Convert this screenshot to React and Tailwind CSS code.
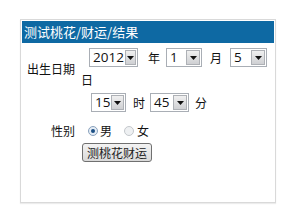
import React from "react";

const cjk = { fontFamily: '"Noto Sans CJK SC", "Noto Sans", sans-serif' };
const num = { fontFamily: '"Open Sans", "Liberation Sans", sans-serif' };

function Select({ value, w }) {
  return (
    <div
      className={`flex h-[19px] shrink-0 items-stretch border border-[#a9aeb5] bg-white ${w}`}
    >
      <div className="flex flex-1 items-center pl-[3px] text-[13.5px] leading-none text-[#111]" style={num}>
        {value}
      </div>
      <div className="m-px flex w-[14px] items-center justify-center border border-[#aeb1b6] bg-gradient-to-b from-[#f0f0f0] to-[#cfd0d3]">
        <svg width="7" height="4" viewBox="0 0 7 4">
          <path d="M0 0H7L3.5 4Z" fill="#111" />
        </svg>
      </div>
    </div>
  );
}

function Radio({ checked }) {
  return (
    <div
      className={`flex h-[10px] w-[10px] items-center justify-center rounded-full border ${
        checked ? "border-[#8aa2bd] bg-[#e4ecf5]" : "border-[#c4c8cc] bg-[#eef0f2]"
      }`}
    >
      {checked && <div className="h-[4px] w-[4px] rounded-full bg-[#1b4f84]" />}
    </div>
  );
}

export default function App() {
  return (
    <div className="h-[221px] w-[295px] bg-white pl-[20px] pt-[19px]" style={cjk}>
      <div className="h-[184px] w-[256px] border border-[#d9d9d9] p-px shadow-[0_1px_1px_#ececec]">
        <div className="h-[22px] bg-[#0e69a3] pl-[2px] text-[13px] leading-[22px] text-white">
          测试桃花/财运/结果
        </div>
        <div className="mt-[5px] grid grid-cols-[53px_1fr] gap-x-[6px] text-[12px] text-[#111]">
          <div className="flex items-center justify-end pt-[1px]">出生日期</div>
          <div>
            <div className="flex h-[19px] items-center pl-[8px]">
              <Select value="2012" w="w-[49px]" />
              <span className="ml-[10px] mr-[6px]">年</span>
              <Select value="1" w="w-[36px]" />
              <span className="ml-[8px] mr-[8px]">月</span>
              <Select value="5" w="w-[37px]" />
            </div>
            <div className="mt-[5px] h-[16px] leading-[16px]">日</div>
          </div>

          <div />
          <div className="mt-[5px] flex h-[19px] items-center pl-[10px]">
            <Select value="15" w="w-[35px]" />
            <span className="ml-[7px] mr-[5px]">时</span>
            <Select value="45" w="w-[39px]" />
            <span className="ml-[6px]">分</span>
          </div>

          <div className="mt-[12px] flex h-[14px] items-center justify-end">性别</div>
          <div className="mt-[12px] flex h-[14px] items-center pl-[7px]">
            <Radio checked />
            <span className="ml-[2px]">男</span>
            <span className="ml-[12px]" />
            <Radio />
            <span className="ml-[3px]">女</span>
          </div>

          <div />
          <div className="mt-[5px] pl-[1px]">
            <button
              className="h-[19px] w-[70px] rounded-[3px] border border-[#707070] bg-gradient-to-b from-[#f3f3f3] to-[#d9d9d9] text-[12px] leading-none text-[#222]"
              style={cjk}
            >
              测桃花财运
            </button>
          </div>
        </div>
      </div>
    </div>
  );
}
